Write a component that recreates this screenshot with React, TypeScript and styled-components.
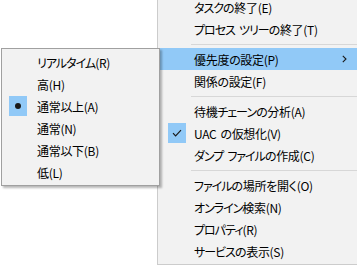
import React from "react";
import styled, { createGlobalStyle } from "styled-components";

const Global = createGlobalStyle`
  html, body { margin: 0; padding: 0; background: #ffffff; }
  body { font-family: "Noto Sans CJK JP", "Noto Sans", sans-serif; }
`;

const Page = styled.div`
  position: relative;
  width: 357px;
  height: 265px;
  overflow: hidden;
  background: #ffffff;
`;

const Menu = styled.div<{ $left: number; $top: number; $width: number; $sub?: boolean }>`
  position: absolute;
  left: ${(p) => p.$left}px;
  top: ${(p) => p.$top}px;
  width: ${(p) => p.$width}px;
  background: #f2f2f2;
  border: 1px solid ${(p) => (p.$sub ? "#a0a0a0" : "#cccccc")};
  box-sizing: border-box;
  padding: 2px 0;
  display: flex;
  flex-direction: column;
  box-shadow: ${(p) => (p.$sub ? "2px 2px 2px rgba(0,0,0,0.28)" : "none")};
  z-index: ${(p) => (p.$sub ? 2 : 1)};
`;

const Item = styled.div<{ $active?: boolean; $indent: number }>`
  position: relative;
  height: 22px;
  display: flex;
  align-items: center;
  padding-left: ${(p) => p.$indent}px;
  margin: 0 2px;
  background: ${(p) => (p.$active ? "#91c9f7" : "transparent")};
  font-size: 12px;
  letter-spacing: -0.3px;
  font-feature-settings: "palt";
  color: #000000;
  white-space: nowrap;
`;

const Kana = styled.span`
  letter-spacing: -1px;
`;

const Space = styled.span`
  display: inline-block;
  width: 4px;
`;

const Separator = styled.div<{ $indent: number }>`
  height: 8px;
  display: flex;
  align-items: center;
  padding-left: ${(p) => p.$indent}px;
  margin: 0 2px;
  &::after {
    content: "";
    flex: 1;
    height: 1px;
    background: #d7d7d7;
  }
`;

const Mark = styled.div<{ $left: number }>`
  position: absolute;
  left: ${(p) => p.$left}px;
  top: 1px;
  width: 18px;
  height: 20px;
  background: #91c9f7;
  display: flex;
  align-items: center;
  justify-content: center;
`;

const Dot = styled.div`
  width: 6px;
  height: 6px;
  border-radius: 50%;
  background: #1a1a1a;
`;

const Arrow = styled.div`
  position: absolute;
  right: 11px;
  top: 0;
  height: 22px;
  display: flex;
  align-items: center;
`;

type Entry = { label?: string; sep?: boolean; active?: boolean; check?: boolean; sub?: boolean };

const mainItems: Entry[] = [
  { label: "タスクの終了(E)" },
  { label: "プロセス ツリーの終了(T)" },
  { sep: true },
  { label: "優先度の設定(P)", active: true, sub: true },
  { label: "関係の設定(F)" },
  { sep: true },
  { label: "待機チェーンの分析(A)" },
  { label: "UAC の仮想化(V)", check: true },
  { label: "ダンプ ファイルの作成(C)" },
  { sep: true },
  { label: "ファイルの場所を開く(O)" },
  { label: "オンライン検索(N)" },
  { label: "プロパティ(R)" },
  { label: "サービスの表示(S)" },
];

const subItems: Entry[] = [
  { label: "リアルタイム(R)" },
  { label: "高(H)" },
  { label: "通常以上(A)", check: true },
  { label: "通常(N)" },
  { label: "通常以下(B)" },
  { label: "低(L)" },
];

// Katakana runs are set tighter, like the proportional kana of the UI font.
const renderLabel = (s: string) =>
  s.split(/([\u30A0-\u30FF]+| )/).map((part, i) => {
    if (part === " ") return <Space key={i} />;
    if (/^[\u30A0-\u30FF]+$/.test(part)) return <Kana key={i}>{part}</Kana>;
    return <React.Fragment key={i}>{part}</React.Fragment>;
  });

const Check = () => (
  <svg width="10" height="8" viewBox="0 0 10 8">
    <path d="M1 4.2 L3.6 6.8 L9 1.2" fill="none" stroke="#1a1a1a" strokeWidth="1.2" />
  </svg>
);

const Chevron = () => (
  <svg width="5" height="8" viewBox="0 0 5 8">
    <path d="M0.8 0.8 L4 4 L0.8 7.2" fill="none" stroke="#1a1a1a" strokeWidth="1.1" />
  </svg>
);

export default function App() {
  return (
    <>
      <Global />
      <Page>
        <Menu $left={157} $top={-7} $width={204}>
          {mainItems.map((e, i) =>
            e.sep ? (
              <Separator key={i} $indent={31} />
            ) : (
              <Item key={i} $active={e.active} $indent={34}>
                {e.check && (
                  <Mark $left={8}>
                    <Check />
                  </Mark>
                )}
                {renderLabel(e.label!)}
                {e.sub && (
                  <Arrow>
                    <Chevron />
                  </Arrow>
                )}
              </Item>
            )
          )}
        </Menu>
        <Menu $left={1} $top={48} $width={159} $sub>
          {subItems.map((e, i) => (
            <Item key={i} $indent={33}>
              {e.check && (
                <Mark $left={5}>
                  <Dot />
                </Mark>
              )}
              {renderLabel(e.label!)}
            </Item>
          ))}
        </Menu>
      </Page>
    </>
  );
}
